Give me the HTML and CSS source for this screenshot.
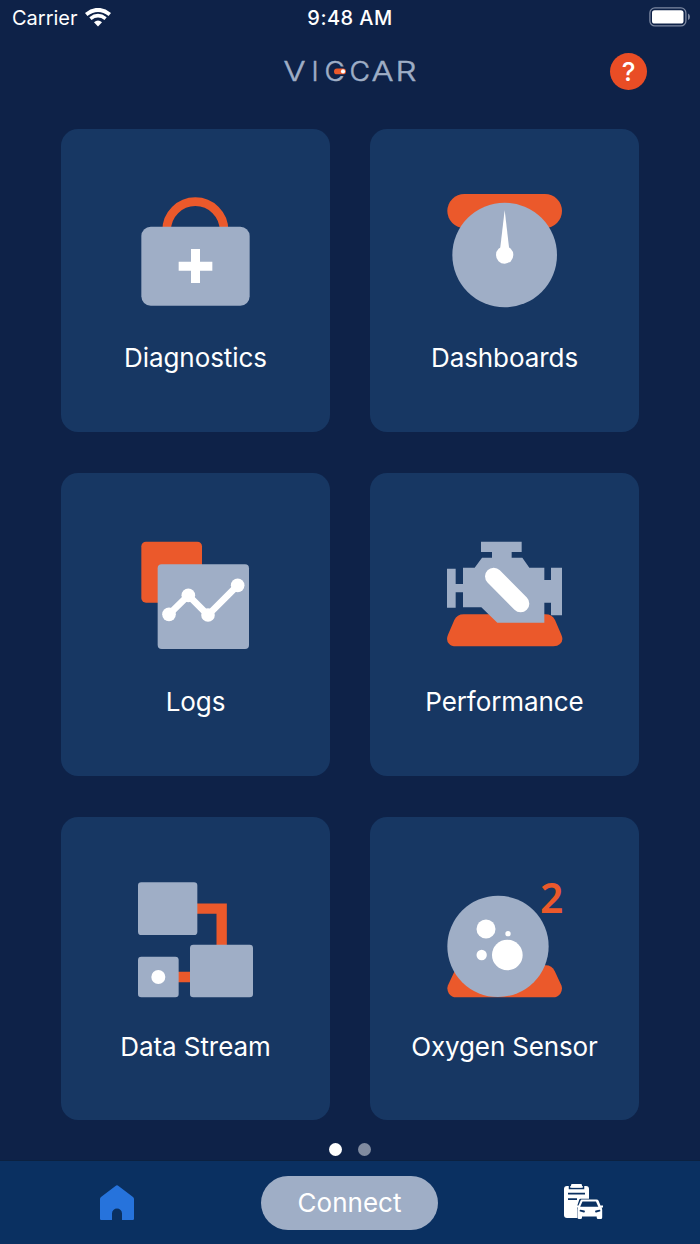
FILE: index.html
```html
<!DOCTYPE html>
<html lang="en">
<head>
<meta charset="utf-8">
<title>Viecar</title>
<link rel="stylesheet" href="styles.css">
</head>
<body>
<div class="app">
  <header class="status">
    <div class="carrier"><span>Carrier</span>
      <svg class="wifi" viewBox="0 0 26 19"><g fill="none" stroke="#fff"><path d="M1.200 6.500Q13-2.700 24.800 6.500" stroke-width="4"/><path d="M5.400 10.600Q13 4.800 20.600 10.600" stroke-width="3.600"/></g><path fill="#fff" d="M9 14.200Q13 11 17 14.200L13 18.400z"/></svg>
    </div>
    <div class="time">9:48 AM</div>
    <svg class="battery" viewBox="0 0 42 20"><rect x=".9" y=".9" width="36" height="18" rx="5" fill="none" stroke="#7c88a1" stroke-width="1.300"/><rect x="3" y="3.200" width="31.500" height="13.300" rx="2.600" fill="#fff"/><path fill="#7c88a1" d="M39 6.500q2 .8 2 3.300t-2 3.300z"/></svg>
  </header>

  <div class="titlebar">
    <svg class="logo" viewBox="0 0 132 22" role="img" aria-label="Viecar">
      <g class="logo-letters">
        <text x="-.5" y="20.500" textLength="22" lengthAdjust="spacingAndGlyphs">V</text>
        <text x="27.500" y="20.500">I</text>
        <text x="40.500" y="20.500" textLength="20.500" lengthAdjust="spacingAndGlyphs">C</text>
        <text x="65.500" y="20.500" textLength="20.500" lengthAdjust="spacingAndGlyphs">C</text>
        <text x="87.500" y="20.500" textLength="22" lengthAdjust="spacingAndGlyphs">A</text>
        <text x="111.500" y="20.500" textLength="21" lengthAdjust="spacingAndGlyphs">R</text>
      </g>
      <rect x="54" y="6.500" width="8" height="9.500" fill="#0e2248"/>
      <rect x="50" y="8.500" width="12" height="5.800" rx="2.900" fill="#eb592b"/>
      <circle cx="59" cy="11.400" r="2.100" fill="#fff"/>
    </svg>
    <div class="help">?</div>
  </div>

  <main class="grid">
    <section class="card">
      <svg class="icon" viewBox="75 36 360 360">
        <path d="M170 151a86 86 0 0 1 172 0" fill="none" stroke="#eb592b" stroke-width="26"/>
        <rect x="94" y="140" width="325" height="237" rx="28" fill="#9faec6"/>
        <path d="M243 207h27v38h37v27h-37v37h-27v-37h-37v-27h37z" fill="#fff"/>
      </svg>
      <div class="label">Diagnostics</div>
    </section>
    <section class="card">
      <svg class="icon" viewBox="72 36 360 360">
        <rect x="82" y="42" width="344" height="102" rx="51" fill="#eb592b"/>
        <circle cx="254" cy="225" r="157" fill="#9faec6"/>
        <path d="M254 90L268 210H240z" fill="#fff"/><circle cx="254" cy="225" r="26" fill="#fff"/>
      </svg>
      <div class="label">Dashboards</div>
    </section>
    <section class="card">
      <svg class="icon" viewBox="75 33 360 360">
        <rect x="94" y="50" width="182" height="183" rx="14" fill="#eb592b"/>
        <rect x="143" y="118" width="274" height="254" rx="12" fill="#9faec6"/>
        <path d="M177 268L235 211L294 270L383 181" fill="none" stroke="#fff" stroke-width="20"/>
        <g fill="#fff"><circle cx="177" cy="268" r="20.500"/><circle cx="235" cy="211" r="20.500"/><circle cx="294" cy="270" r="20.500"/><circle cx="383" cy="181" r="20.500"/></g>
      </svg>
      <div class="label">Logs</div>
    </section>
    <section class="card">
      <svg class="icon" viewBox="72 33 360 360">
        <path d="M131 268H376Q397 268 405 285L424 329Q432 347 420 357Q413 364 400 364H108Q94 364 87 356Q77 346 84 329L103 285Q111 268 131 268z" fill="#eb592b"/>
        <path d="M183 50H305V81H275V98H307L328 128H373V165H393V128H426V271H393V233H373V293H232L184 247H129V202H107V248H81V131H107V177H129V128H164L186 98H216V81H183z" fill="#9faec6"/>
        <path d="M221 154L302 236" stroke="#fff" stroke-width="52" stroke-linecap="round"/>
      </svg>
      <div class="label">Performance</div>
    </section>
    <section class="card">
      <svg class="icon" viewBox="75 33 360 360">
        <path d="M260 116H335V230M200 321H245" fill="none" stroke="#eb592b" stroke-width="31"/>
        <g fill="#9faec6"><rect x="84" y="37" width="178" height="158" rx="10"/><rect x="84" y="260" width="122" height="122" rx="10"/><rect x="240" y="224" width="189" height="158" rx="10"/></g>
        <circle cx="145" cy="321" r="21" fill="#fff"/>
      </svg>
      <div class="label">Data Stream</div>
    </section>
    <section class="card">
      <svg class="icon" viewBox="132 33 360 360">
        <path d="M191 286H437Q456 286 464 303L484 346Q489 359 481 371Q473 382 459 382H169Q155 382 147 371Q139 359 144 346L164 303Q172 286 191 286z" fill="#eb592b"/>
        <circle cx="294" cy="229" r="152" fill="#9faec6"/>
        <g fill="#fff"><circle cx="258" cy="177" r="28.500"/><circle cx="324" cy="191" r="8"/><circle cx="245" cy="255" r="15.500"/><circle cx="322" cy="255" r="46"/></g>
        <text class="two" x="420" y="129" textLength="70" lengthAdjust="spacingAndGlyphs">2</text>
      </svg>
      <div class="label oxygen">Oxygen Sensor</div>
    </section>
  </main>

  <div class="dots"><i class="dot active"></i><i class="dot"></i></div>

  <nav class="tabbar">
    <div class="tab"><svg class="home" viewBox="0 0 34 36"><path fill="#2673dc" d="M15.500.9Q17-.4 18.500.9L33 12Q34 12.900 34 14V33.800Q34 35 32.800 35H22V28.500a5 5 0 0 0-10 0V35H1.200Q0 35 0 33.800V14Q0 12.900 1 12z"/></svg></div>
    <button class="connect">Connect</button>
    <div class="tab"><svg class="report" viewBox="0 0 40 38">
      <rect x="1" y="2" width="25" height="32" rx="3" fill="#fff"/>
      <path d="M6.500 1V4.500H20.500V1" fill="none" stroke="#0a3061" stroke-width="1.500"/>
      <rect x="8" y="0" width="11" height="3.500" rx="1.300" fill="#fff"/>
      <path d="M5 9.700H22M5 15.200H14" stroke="#0a3061" stroke-width="1.700"/>
      <path d="M17.500 16H34.500L39.500 22V34.500H15.500V22z" fill="#0a3061" stroke="#0a3061" stroke-width="2.500" stroke-linejoin="round"/>
      <path d="M18.500 15.500H33.500Q35 15.500 35.600 16.800L37.500 21.500H40V23.500H38.600Q39.200 24.500 39.200 26V33.500Q39.200 35 37.700 35H35.200Q33.700 35 33.700 33.500V32.500H19V33.500Q19 35 17.500 35H16Q14.500 35 14.500 33.500V26Q14.500 24.500 15 23.500H13V21.500H15.500L17.500 16.700Q17.900 15.500 18.500 15.500z" fill="#fff"/>
      <path d="M19.500 17.500H33L35.300 22.800H17.200z" fill="#0a3061"/>
      <path d="M17.500 26.700L21 27.500M36.500 26.700L33 27.500" stroke="#0a3061" stroke-width="1.800" stroke-linecap="round"/>
    </svg></div>
  </nav>
</div>
</body>
</html>
```

FILE: styles.css
```css
* { box-sizing: border-box; }
body { margin: 0; font-family: Inter, "Liberation Sans", sans-serif; color: #fff; }
.app { width: 700px; height: 1244px; display: flex; flex-direction: column; background: #0e2248; overflow: hidden; }

.status { height: 40px; padding: 0 9px 4px 12px; display: grid; grid-template-columns: 1fr auto 1fr; align-items: center; font-size: 20px; line-height: 36px; }
.carrier { display: flex; align-items: center; gap: 7px; }
.wifi { width: 26px; height: 19px; margin-top: -2px; }
.time { font-weight: 500; letter-spacing: .45px; padding-right: 3px; }
.battery { width: 42px; height: 20px; justify-self: end; margin-top: -2px; }

.titlebar { height: 88px; padding: 12px 53px 0 284px; display: flex; align-items: flex-start; justify-content: space-between; }
.logo { width: 132px; height: 22px; margin-top: 8px; overflow: visible; }
.logo-letters { font-family: Inter, sans-serif; font-size: 27px; font-weight: 300; fill: #9faec6; stroke: #9faec6; stroke-width: .5px; }
.help { width: 37px; height: 37px; margin-top: .5px; border-radius: 50%; background: #e94d25; font-size: 26px; font-weight: 500; line-height: 37px; text-align: center; }

.grid { padding: .5px 61px 0; display: grid; grid-template-columns: 269px 269px; grid-auto-rows: 303.250px; gap: 41px 40px; }
.card { border-radius: 17px; background: #173763; padding-top: 63.500px; display: flex; flex-direction: column; align-items: center; gap: 28px; }
.icon { width: 120px; height: 120px; margin-right: 1px; overflow: visible; }
.label { font-size: 26px; line-height: 36px; letter-spacing: -.07px; white-space: nowrap; }
.oxygen { letter-spacing: -.15px; }
.two { font-family: "Noto Sans", sans-serif; font-size: 126px; font-weight: 600; fill: #eb592b; }

.dots { height: 40px; padding-top: 22.500px; display: flex; justify-content: center; gap: 16px; }
.dot { width: 13px; height: 13px; border-radius: 50%; background: #808ba0; }
.dot.active { background: #fff; }

.tabbar { flex: 1; display: grid; grid-template-columns: 233px 233px 234px; justify-items: center; align-items: start; background: #0a3061; border-top: 1px solid #0b2140; }
.tab { display: flex; }
.home { width: 34px; height: 36px; margin-top: 24px; }
.report { width: 40px; height: 38px; margin-top: 23px; }
.connect { width: 177px; height: 54px; margin-top: 15px; border: 0; border-radius: 27px; padding: 0; background: #9faec6; color: #fff; font: 400 26px/54px Inter, sans-serif; }
```
